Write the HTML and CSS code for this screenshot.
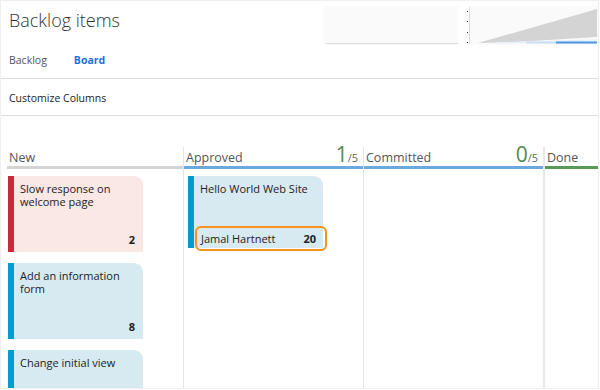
FILE: index.html
```html
<!DOCTYPE html>
<html lang="en">
<head>
  <meta charset="utf-8">
  <title>Backlog items</title>
  <link rel="stylesheet" href="styles.css">
</head>
<body>
  <div class="frame">
    <div class="header">
      <div class="top-row">
        <h1 class="title">Backlog items</h1>
        <svg class="chart-cfd" width="135" height="39" viewBox="0 0 135 39">
          <rect x="0" y="0" width="135" height="39" fill="#fafafa"/>
          <line x1="3" y1="37.5" x2="135" y2="37.5" stroke="#dcdcdc" stroke-width="1"/>
        </svg>
        <svg class="chart-burn" width="132" height="39" viewBox="0 0 132 39">
          <rect x="3" y="0" width="129" height="39" fill="#fafafa"/>
          <line x1="3.5" y1="1" x2="3.5" y2="38" stroke="#dcdcdc"/>
          <rect x="1" y="5" width="1" height="1" fill="#333"/>
          <rect x="1" y="15" width="1" height="1" fill="#333"/>
          <rect x="1" y="26" width="1" height="1" fill="#333"/>
          <rect x="1" y="36" width="1" height="1" fill="#333"/>
          <polygon points="12,37 131,3 131,31 50,36" fill="#d4d4d4"/>
          <line x1="30" y1="37" x2="131" y2="34" stroke="#e8f1fa" stroke-width="1.5"/>
          <line x1="60" y1="36.5" x2="131" y2="36.5" stroke="#c7def4" stroke-width="2"/>
          <line x1="90" y1="36.5" x2="131" y2="36.5" stroke="#4d9ae0" stroke-width="2"/>
        </svg>
      </div>
      <div class="tabs">
        <span class="tab">Backlog</span>
        <span class="tab active">Board</span>
      </div>
    </div>
    <div class="toolbar">Customize Columns</div>
    <div class="board">
      <div class="column col-new">
        <div class="col-head head-new"><span class="col-name">New</span></div>
        <div class="card bug">
          <div class="card-title">Slow response on welcome page</div>
          <div class="card-foot"><span></span><b>2</b></div>
        </div>
        <div class="card pbi">
          <div class="card-title">Add an information form</div>
          <div class="card-foot"><span></span><b>8</b></div>
        </div>
        <div class="card pbi">
          <div class="card-title">Change initial view</div>
        </div>
      </div>
      <div class="column col-approved">
        <div class="col-head head-blue">
          <span class="col-name">Approved</span>
          <span class="limit"><span class="count">1</span>/5</span>
        </div>
        <div class="card pbi short">
          <div class="card-title">Hello World Web Site</div>
          <div class="card-foot focus"><span>Jamal Hartnett</span><b>20</b></div>
        </div>
      </div>
      <div class="column col-committed">
        <div class="col-head head-blue">
          <span class="col-name">Committed</span>
          <span class="limit"><span class="count">0</span>/5</span>
        </div>
      </div>
      <div class="column col-done">
        <div class="col-head head-done"><span class="col-name">Done</span></div>
      </div>
    </div>
  </div>
</body>
</html>
```

FILE: styles.css
```css
body {
  margin: 0;
  background: #fff;
  font-family: "Open Sans", "Noto Sans", sans-serif;
  color: #222;
}
.frame {
  box-sizing: border-box;
  width: 599px;
  height: 389px;
  border: 1px solid #eeeeee;
  overflow: hidden;
}
.header {
  border-bottom: 1px solid #dddddd;
}
.top-row {
  display: flex;
  align-items: flex-start;
  height: 43px;
}
.title {
  margin: 0;
  padding: 6px 0 0 8px;
  font-size: 18px;
  font-weight: 300;
  color: #333;
  line-height: 26px;
}
.chart-cfd {
  margin: 5px 0 0 auto;
}
.chart-burn {
  margin: 5px 0 0 8px;
}
.tabs {
  display: flex;
  height: 34px;
  align-items: center;
  padding: 0 0 2px 8px;
  box-sizing: border-box;
  font-size: 10.5px;
}
.tab {
  color: #555;
  margin-right: 27px;
}
.tab.active {
  color: #1d6fd9;
  font-weight: bold;
}
.toolbar {
  height: 36px;
  line-height: 38px;
  padding-left: 8px;
  font-size: 10.5px;
  color: #222;
  border-bottom: 1px solid #dddddd;
}
.board {
  display: flex;
  padding: 31px 0 0 6px;
  height: 280px;
}
.column {
  border-left: 1px solid #e4e4e4;
}
.col-new {
  width: 176px;
  border-left: none;
}
.col-approved {
  width: 179px;
}
.col-committed {
  width: 179px;
}
.col-done {
  flex: 1;
  border-left: 2px solid #e8e8e8;
}
.col-head {
  display: flex;
  justify-content: space-between;
  align-items: flex-end;
  height: 19px;
  padding: 0 5px 0 2px;
  border-bottom: 3px solid #d4d4d4;
  font-size: 12.5px;
  color: #555;
  margin-bottom: 7px;
}
.col-name {
  line-height: 17px;
}
.head-blue {
  border-bottom-color: #6aa9dd;
}
.head-done {
  border-bottom-color: #5a9a57;
}
.limit {
  font-size: 11px;
  color: #666;
  line-height: 17px;
}
.count {
  font-size: 21px;
  color: #4f8a4f;
  font-weight: 400;
}
.card {
  box-sizing: border-box;
  width: 135px;
  height: 76px;
  margin: 0 0 11px 1px;
  padding: 6px 8px 0 6px;
  border-left: 6px solid #009ccc;
  border-top-right-radius: 9px;
  background: #d7eaf2;
  font-size: 11px;
  line-height: 13px;
  display: flex;
  flex-direction: column;
  justify-content: space-between;
}
.card.bug {
  background: #f9e8e4;
  border-left-color: #cc293d;
}
.card.short {
  height: 72px;
}
.col-approved .card {
  margin-left: 4px;
}
.card-title {
  color: #222;
}
.card-foot {
  display: flex;
  justify-content: space-between;
  padding-bottom: 6px;
}
.card-foot b {
  font-weight: bold;
}
.card-foot.focus {
  margin: 0 -12px -3px -5px;
  padding: 4px 9px 4px 4px;
  border: 2px solid #f7921c;
  border-radius: 6px;
}
```
